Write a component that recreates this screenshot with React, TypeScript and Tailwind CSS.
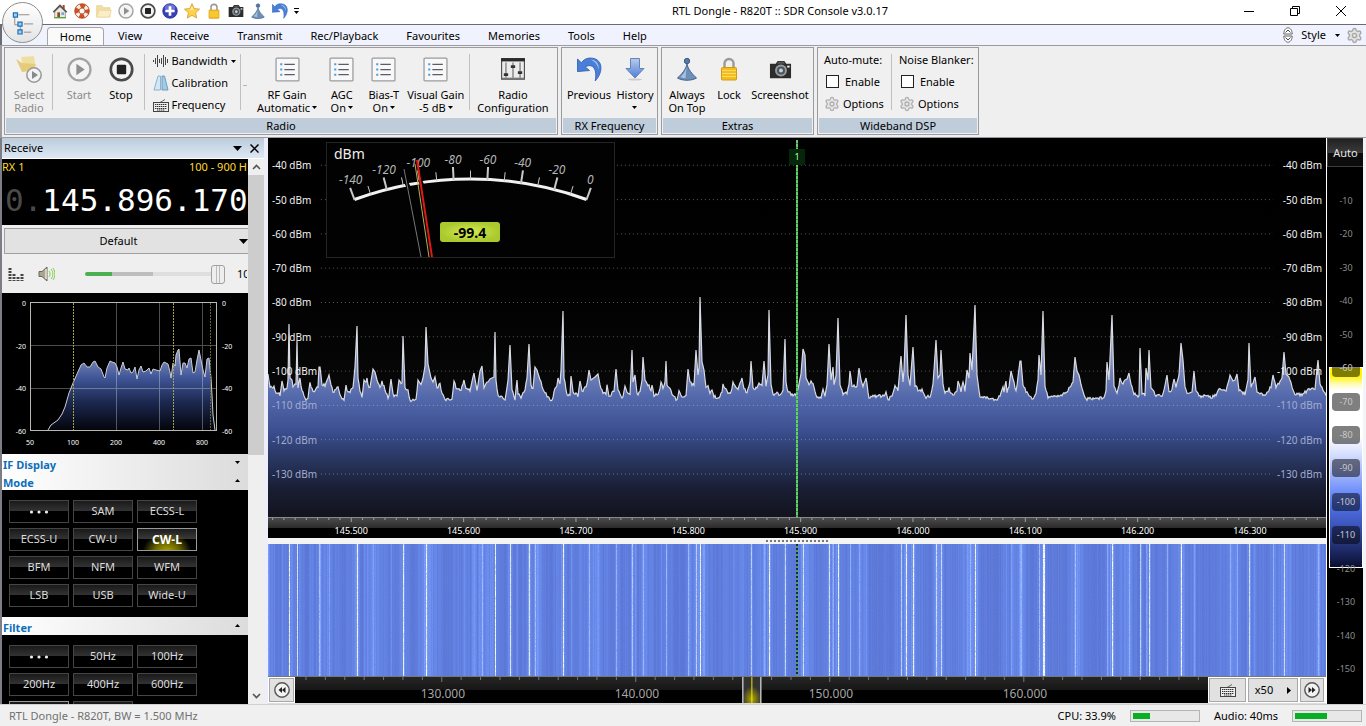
import React from "react";
import { Settings } from "lucide-react";

type IconProps = { size: number };

/* ---------- icons ---------- */

const House = ({ size }: IconProps) => (
  <svg width={size} height={size} viewBox="0 0 24 24" aria-hidden="true">
    <path d="M16 3h3v6h-3z" fill="#c0392b" />
    <path d="M4 12l8-8 8 8v10H4z" fill="#eceadf" stroke="#777" />
    <path d="M1 13L12 2l11 11-2 1.6L12 6 3 14.600z" fill="#555" />
    <path d="M8 14h4v8H8z" fill="#8a4b22" />
    <path d="M14 14h4v4h-4z" fill="#6fa8dc" />
    <path d="M3 21h18v2H3z" fill="#5fa243" />
  </svg>
);

const Lifebuoy = ({ size }: IconProps) => (
  <svg width={size} height={size} viewBox="0 0 24 24" aria-hidden="true">
    <circle cx="12" cy="12" r="7.700" fill="none" stroke="#d2501e" strokeWidth="6.500" />
    <circle cx="12" cy="12" r="7.700" fill="none" stroke="#f5efe9" strokeWidth="6" strokeDasharray="5 7.100" strokeDashoffset="-3.500" />
    <circle cx="12" cy="12" r="11" fill="none" stroke="#a33a12" />
    <circle cx="12" cy="12" r="4.400" fill="none" stroke="#a33a12" />
  </svg>
);

const Folder = ({ size }: IconProps) => (
  <svg width={size} height={size} viewBox="0 0 24 24" aria-hidden="true">
    <path d="M1 4h8l2 3h10v14H1z" fill="#f3dfa4" stroke="#e3cb85" />
    <path d="M5 11h18l-3 10H1z" fill="#fbeec6" stroke="#e6d196" />
  </svg>
);

const Play = ({ size }: IconProps) => (
  <svg width={size} height={size} viewBox="0 0 24 24" aria-hidden="true">
    <circle cx="12" cy="12" r="10.500" fill="#f4f4f4" stroke="#a3a3a3" strokeWidth="2.200" />
    <path d="M9 6.500l8 5.500-8 5.500z" fill="#8f8f8f" />
  </svg>
);

const Stop = ({ size }: IconProps) => (
  <svg width={size} height={size} viewBox="0 0 24 24" aria-hidden="true">
    <circle cx="12" cy="12" r="10.300" fill="#f4f4f4" stroke="#4a4a4a" strokeWidth="2.600" />
    <rect x="7.500" y="7.500" width="9" height="9" rx="1" fill="#222" />
  </svg>
);

const Plus = ({ size }: IconProps) => (
  <svg width={size} height={size} viewBox="0 0 24 24" aria-hidden="true">
    <circle cx="12" cy="12" r="11" fill="#3742b8" stroke="#20287e" />
    <ellipse cx="12" cy="7" rx="8" ry="5" fill="#7c86e4" opacity="0.700" />
    <path d="M10 5h4v5h5v4h-5v5h-4v-5H5v-4h5z" fill="#fff" />
  </svg>
);

const Star = ({ size }: IconProps) => (
  <svg width={size} height={size} viewBox="0 0 24 24" aria-hidden="true">
    <path d="M12 1l3.300 7.300 8 .9-6 5.300 1.800 8L12 18.500 4.900 22.500l1.800-8-6-5.300 8-.9z" fill="#fbd34c" stroke="#e0992a" strokeWidth="1.300" />
    <path d="M12 4l2 6-9 0 5-.500z" fill="#fff3b8" />
  </svg>
);

const Lock = ({ size }: IconProps) => (
  <svg width={size} height={size} viewBox="0 0 24 24" aria-hidden="true">
    <path d="M7.500 11V6.500a4.500 4.500 0 019 0V11" fill="none" stroke="#9a9a9a" strokeWidth="2.400" />
    <rect x="4.500" y="10.500" width="15" height="12.500" rx="1" fill="#f5bd1b" stroke="#d39a10" />
    <path d="M5 13.500h14M5 16.500h14M5 19.500h14" stroke="#fbdc6a" />
  </svg>
);

const Camera = ({ size }: IconProps) => (
  <svg width={size} height={size} viewBox="0 0 24 24" aria-hidden="true">
    <path d="M1 6h6l2-3h7l2 3h5v15H1z" fill="#2c2c2c" />
    <path d="M9.500 4h6l1 2h-8z" fill="#555" />
    <circle cx="12.500" cy="13" r="6.200" fill="#9a9a9a" />
    <circle cx="12.500" cy="13" r="4.200" fill="#4a5560" />
    <circle cx="12.500" cy="13" r="2" fill="#c5d2dd" />
    <rect x="19" y="8" width="2.500" height="2" fill="#eee" />
  </svg>
);

const Pawn = ({ size }: IconProps) => (
  <svg width={size} height={size} viewBox="0 0 24 24" aria-hidden="true">
    <path d="M12 7c1 5 5 10 9.500 14-5 3-14 3-19 0C7 17 11 12 12 7z" fill="#6d8fb8" stroke="#41618b" />
    <path d="M11.500 10c-1 4-3 7-6 10 2 1 4 1.200 5 1.200z" fill="#a9c1dc" />
    <circle cx="12" cy="4" r="2.700" fill="#5679a6" stroke="#3d5c86" />
  </svg>
);

const Undo = ({ size }: IconProps) => (
  <svg width={size} height={size} viewBox="0 0 24 24" aria-hidden="true">
    <path d="M.5 2v12L12 13 8 9.500c5-3 12-1 9.500 13.500C26 14 25 .5 12 1 8.500 1.300 6 3 4.200 5.500z" fill="#4a7fd8" stroke="#2d5cb4" strokeWidth="0.800" />
    <path d="M13 2.500c5 0 8.500 4 8 10-1-5-4-8-8-10z" fill="#9cc0f2" />
  </svg>
);

const DownArrow = ({ size }: IconProps) => (
  <svg width={size} height={size} viewBox="0 0 24 24" aria-hidden="true">
    <defs>
      <linearGradient id="arrowFill" x1="0" y1="0" x2="0" y2="1">
        <stop offset="0" stopColor="#b9cbea" />
        <stop offset="1" stopColor="#4f7fd6" />
      </linearGradient>
    </defs>
    <ellipse cx="12" cy="22.500" rx="7" ry="1" fill="#ccc" />
    <path d="M7.500 1.500h9v10h4.500L12 21 3 11.500h4.500z" fill="url(#arrowFill)" stroke="#6383bd" />
  </svg>
);

const ListBox = ({ size }: IconProps) => (
  <svg width={size} height={size} viewBox="0 0 24 24" aria-hidden="true">
    <rect x="1" y="1" width="22" height="22" rx="1" fill="#f8f8f8" stroke="#9a9a9a" strokeWidth="1.200" />
    <path d="M5 6h2v2H5zM5 11h2v2H5zM5 16h2v2H5z" fill="#4aa0e0" />
    <path d="M9 7h10M9 12h10M9 17h10" stroke="#5c5c66" strokeWidth="1.200" />
  </svg>
);

const Mixer = ({ size }: IconProps) => (
  <svg width={size} height={size} viewBox="0 0 24 24" aria-hidden="true">
    <rect x="1.500" y="2.500" width="21" height="19" fill="#ececec" stroke="#444" />
    <path d="M1 2h22v3H1z" fill="#2a2a2a" />
    <path d="M1.500 20h21v2h-21z" fill="#777" />
    <path d="M5.500 6v14M12 6v14M18.500 6v14" stroke="#666" />
    <path d="M3.500 16h4v2.500h-4zM10 8.500h4V11h-4zM16.500 14h4v2.500h-4z" fill="#333" />
  </svg>
);

const FolderPlay = ({ size }: IconProps) => (
  <svg width={size} height={size} viewBox="0 0 28 28" aria-hidden="true">
    <path d="M6 2l13-1 2 13-12 2z" fill="#f0dea0" />
    <path d="M1 4l6 4 14 1-4 7-10 1z" fill="#e6cc7a" />
    <circle cx="19" cy="20" r="7.200" fill="#f3f3f3" stroke="#979797" strokeWidth="1.500" />
    <path d="M17 16l6 4-6 4z" fill="#8a8a8a" />
  </svg>
);

const Bandwidth = () => (
  <svg width="16" height="16" viewBox="0 0 16 16" aria-hidden="true">
    <path d="M.5 7v2M2.500 5v6M4.500 2v12M6.500 6v4M8.500 5v6M10.500 2v12M12.500 4v8M14.500 6v4" stroke="#444" />
  </svg>
);

const Calibration = () => (
  <svg width="16" height="16" viewBox="0 0 16 16" aria-hidden="true">
    <path d="M5 1h2.500v14H1z" fill="#d3e8f5" stroke="#8ab4d0" />
    <path d="M9 1h2.500L15 15H9z" fill="#a5cbe4" stroke="#6b9dc0" />
  </svg>
);

const Keyboard = () => (
  <svg width="16" height="16" viewBox="0 0 16 16" aria-hidden="true">
    <path d="M7 5.500L12 2.500" fill="none" stroke="#666" />
    <rect x="0.500" y="5.500" width="15" height="9" fill="#eee" stroke="#444" />
    <path d="M2 7.500h12M2 9.500h12M2 11.500h12M4 13h8" stroke="#333" strokeDasharray="1.400 .6" />
  </svg>
);

const Caret = ({ up = false }: { up?: boolean }) => (
  <svg width="5" height="3" viewBox="0 0 5 3" className="shrink-0" aria-hidden="true">
    <path d={up ? "M0 3h5L2.500 0z" : "M0 0h5L2.500 3z"} fill="#000" />
  </svg>
);

/* ---------- signal data ---------- */

const TRACE: number[][] =
  `268,374 270,388 274,387 276,392 280,395 282,381 284,390 287,388 288,380 289,324 290,378 292,380 293,387 296,384 297,341 298,388 300,378 302,391 306,400 308,397 310,383 313,392 317,388 318,386 319,367 320,367 322,384 325,385 328,378 329,375 331,385 333,392 338,387 341,397 344,399 346,386 347,392 350,392 353,388 355,367 357,326 358,378 360,391 362,396 364,380 366,383 367,378 368,386 370,387 373,369 375,372 377,380 380,387 382,381 385,390 388,398 389,396 391,379 393,395 397,396 399,380 402,384 403,336 405,388 408,391 410,400 416,400 418,380 421,385 423,378 425,366 426,327 428,364 431,378 433,382 435,377 437,389 440,383 441,391 446,400 452,398 454,381 457,390 461,390 464,380 466,388 470,390 473,377 474,373 476,385 477,390 480,371 482,366 484,388 490,379 494,377 495,332 496,380 498,396 505,399 508,380 510,345 512,390 515,400 517,380 518,394 521,398 525,390 527,378 529,344 531,386 533,388 535,367 537,370 541,383 544,392 550,399 552,401 554,392 557,385 558,378 560,385 561,370 563,311 564,378 567,394 570,396 571,376 573,392 578,396 580,381 582,392 587,385 589,370 591,380 595,377 598,374 601,390 606,395 607,384 609,397 614,391 616,369 618,391 620,394 623,398 625,385 627,392 630,396 632,350 633,382 635,375 637,394 640,393 642,380 643,357 645,380 649,386 651,391 652,384 654,395 659,393 661,382 663,388 665,382 666,361 667,385 672,393 676,400 678,397 679,391 681,396 686,396 688,369 690,383 694,385 696,350 698,375 699,368 700,297 702,362 704,370 706,388 708,386 710,395 712,390 714,396 718,399 722,392 723,385 727,392 731,392 733,382 735,385 738,390 742,378 744,388 747,394 750,382 751,361 753,387 755,389 757,388 759,383 762,386 764,361 766,385 768,375 769,310 771,385 773,395 777,393 780,396 783,390 785,339 786,382 788,392 792,395 796,395 798,388 801,374 803,349 805,355 806,378 809,384 811,381 813,384 815,392 817,398 821,397 823,389 825,395 827,385 829,344 831,380 833,367 834,385 836,376 838,318 840,385 843,394 847,393 849,385 850,371 852,385 857,386 859,368 861,380 863,387 866,378 868,391 869,397 873,396 878,396 883,396 886,393 888,399 892,397 895,386 898,390 901,356 903,382 904,370 906,315 908,375 910,385 913,347 915,385 919,392 922,390 926,397 930,396 933,385 936,340 938,378 940,375 941,350 943,385 945,394 949,389 953,396 957,390 958,381 961,391 963,382 965,390 967,370 969,378 970,353 972,370 975,305 977,375 980,397 985,398 990,398 997,400 1000,396 1003,386 1004,393 1006,381 1007,393 1009,386 1011,371 1014,383 1016,392 1020,361 1021,361 1023,385 1027,393 1032,399 1036,393 1038,380 1039,355 1041,375 1043,311 1045,385 1048,397 1052,396 1062,395 1068,390 1073,382 1075,357 1077,371 1079,375 1082,388 1086,400 1088,398 1095,399 1104,397 1106,390 1107,362 1109,380 1112,315 1114,385 1117,392 1119,384 1120,378 1122,384 1125,380 1127,379 1129,373 1131,385 1134,394 1139,396 1140,348 1142,393 1145,396 1146,368 1148,380 1149,350 1151,388 1156,395 1163,395 1167,375 1169,392 1172,389 1174,379 1176,388 1179,375 1181,343 1183,360 1185,388 1188,394 1192,392 1194,371 1196,392 1200,396 1212,397 1217,394 1219,389 1226,390 1229,380 1230,375 1233,381 1235,380 1237,374 1239,390 1245,394 1248,380 1249,343 1251,388 1255,377 1257,392 1265,395 1271,387 1273,375 1276,388 1282,378 1284,352 1286,374 1289,377 1292,387 1295,394 1302,395 1308,390 1315,388 1318,360 1320,384 1326,396`
    .split(" ")
    .map((p) => p.split(",").map(Number));

const jitter = (n: number) => {
  const v = Math.sin(n * 127.1) * 43758.5453;
  return v - Math.floor(v);
};

const COLUMNS: number[] = (() => {
  const out: number[] = [];
  let k = 0;
  for (let x = 268; x <= 1326; x++) {
    while (k < TRACE.length - 2 && TRACE[k + 1][0] < x) k++;
    const [x0, y0] = TRACE[k];
    const [x1, y1] = TRACE[k + 1];
    const y = y0 + ((y1 - y0) * (x - x0)) / (x1 - x0);
    out.push(y > 382 ? y + (jitter(x) - 0.5) * 3 : y);
  }
  return out;
})();

const TRACE_POINTS = COLUMNS.map((y, i) => `${i},${(y - 138).toFixed(1)}`).join(" ");

/* Waterfall palette, from the noise floor up to a strong carrier. */
const STOPS = [
  [90, 119, 216],
  [98, 131, 230],
  [114, 149, 248],
  [158, 188, 255],
  [252, 252, 236],
];

const heat = (i: number) => {
  const y = COLUMNS[i];
  const peak = y < 376 && y <= Math.min(...COLUMNS.slice(Math.max(0, i - 2), i + 3));
  const level = peak ? 2.3 + (374 - y) / 24 : Math.min(1.7, (398 - y) / 15);
  const t = Math.max(0, Math.min(3.99, level + jitter(i + 3000) * 0.9 - 0.3));
  const a = Math.floor(t);
  const f = t - a;
  const c = STOPS[a].map((v, n) => Math.round(v + (STOPS[a + 1][n] - v) * f));
  return `rgb(${c.join(",")})`;
};

/* ---------- window chrome ---------- */

const QUICK: [string, React.FC<IconProps>][] = [
  ["Home", House],
  ["Help", Lifebuoy],
  ["Open", Folder],
  ["Start", Play],
  ["Stop", Stop],
  ["Add", Plus],
  ["Favourite", Star],
  ["Lock", Lock],
  ["Screenshot", Camera],
  ["Always on top", Pawn],
  ["Previous", Undo],
];

function TitleBar() {
  return (
    <header className="relative flex h-6 shrink-0 items-center bg-white pb-[2px]">
      <button aria-label="Application menu" className="absolute left-[2px] top-[2px] z-10 flex size-[41px] items-center justify-center rounded-full border border-[#8c8c8c] bg-linear-to-b from-white to-[#e4e4e4]">
        <svg width="22" height="24" viewBox="0 0 24 26" aria-hidden="true">
          <path d="M3 6v9h4M9 15v8M7 4h12M13 14h10M13 23h8" fill="none" stroke="#888" />
          <path d="M1.500 2h4.500v4.500H1.500zM6.500 12H11v4.500H6.500zM6.500 20.500H11V25H6.500z" fill="#9fd0f5" stroke="#1f6fb5" strokeWidth="1.300" />
        </svg>
      </button>
      <div className="flex w-[334px] shrink-0 items-center gap-[6px] pl-[52px]">
        {QUICK.map(([label, Icon]) => (
          <button key={label} aria-label={label}>
            <Icon size={16} />
          </button>
        ))}
        <button aria-label="Customise toolbar" className="flex flex-col items-center gap-[2px]">
          <i className="h-px w-[5px] bg-black" />
          <Caret />
        </button>
      </div>
      <h1 className="flex-1 text-center">RTL Dongle - R820T :: SDR Console v3.0.17</h1>
      <div className="flex h-full pr-[2px]">
        <button aria-label="Minimise" className="flex w-[46px] items-center justify-center">
          <svg width="10" height="10" viewBox="0 0 10 10"><path d="M0 5.500h10" stroke="#000" /></svg>
        </button>
        <button aria-label="Restore" className="flex w-[46px] items-center justify-center">
          <svg width="10" height="10" viewBox="0 0 10 10"><path d="M.5 2.500h7v7h-7zM2.500 2.500v-2h7v7h-2" fill="none" stroke="#000" /></svg>
        </button>
        <button aria-label="Close" className="flex w-[46px] items-center justify-center">
          <svg width="10" height="10" viewBox="0 0 10 10"><path d="M0 0l10 10M10 0L0 10" stroke="#000" /></svg>
        </button>
      </div>
    </header>
  );
}

function Tabs() {
  return (
    <nav className="flex h-[21px] shrink-0 items-stretch border-t border-l-2 border-[#6b6b73] bg-[#f0f3fd] pl-[45px]">
      <a href="#home" className="mt-[2px] flex w-[57px] items-center justify-center rounded-t border border-b-0 border-[#a6a6a6] bg-[#fafafa]">Home</a>
      {["View", "Receive", "Transmit", "Rec/Playback", "Favourites", "Memories", "Tools", "Help"].map((t) => (
        <a key={t} href={`#${t.toLowerCase()}`} className="flex items-center px-[14px] pt-[2px]">{t}</a>
      ))}
      <div className="ml-auto flex items-center gap-2 pr-[3px]">
        <svg width="10" height="16" viewBox="0 0 10 16" aria-hidden="true">
          <path d="M.8 7C.8 3 3 .8 5 .8S9.200 3 9.200 7zM.8 9c0 4 2.200 6.200 4.200 6.200S9.200 13 9.200 9z" fill="#fff" stroke="#666" />
          <path d="M2.500 5.500L5 3l2.500 2.500M2.500 10.500L5 13l2.500-2.500" fill="none" stroke="#444" />
        </svg>
        <div className="flex items-center gap-[6px]">
          <button className="flex items-center gap-[9px]">Style <Caret /></button>
          <Settings size={17} className="text-[#a8a8a8]" fill="#e4e4e4" />
        </div>
      </div>
    </nav>
  );
}

function Group({ label, children, className = "" }: { label: string; children: React.ReactNode; className?: string }) {
  return (
    <section className={`flex shrink-0 flex-col border border-[#9a9aa0] bg-[#f0f0f0] p-px ${className}`}>
      <div className="flex flex-1">{children}</div>
      <h2 className="h-[15px] bg-[#bfccda] text-center leading-[15px]">{label}</h2>
    </section>
  );
}

function Big({ icon, top, bottom, caret = false, dim = false, className = "" }: { icon: React.ReactNode; top: string; bottom?: string; caret?: boolean; dim?: boolean; className?: string }) {
  return (
    <button className={`flex shrink-0 flex-col items-center gap-[6px] whitespace-nowrap pt-[7px] leading-[13px] ${dim ? "text-[#8a8a8a]" : ""} ${className}`}>
      <span className="flex h-[26px] items-center">{icon}</span>
      <span className="flex flex-col items-center">
        <span>{top}</span>
        <span className="flex min-h-[13px] items-center gap-[2px]">{bottom}{caret && <Caret />}</span>
      </span>
    </button>
  );
}

const Sep = () => <i className="mt-[5px] h-14 w-px shrink-0 bg-[#c0c0c0]" />;

function DspColumn({ id, label }: { id: string; label: string }) {
  return (
    <div className="flex flex-col gap-[5px] whitespace-nowrap pt-[3px]">
      <span className="leading-[16px]">{label}</span>
      <label htmlFor={id} className="flex items-center gap-[6px] pl-[2px] leading-[17px]">
        <input id={id} type="checkbox" className="size-[13px] appearance-none border border-[#222] bg-white checked:bg-[#333]" />
        Enable
      </label>
      <button className="flex items-center gap-[3px] leading-[17px]">
        <Settings size={16} className="text-[#b0b0b0]" fill="#e6e6e6" />
        Options
      </button>
    </div>
  );
}

function Ribbon() {
  return (
    <div className="flex h-[93px] shrink-0 gap-[3px] overflow-hidden border-y border-l-2 border-[#9a9aa0] bg-[#efefef] pb-[2px] pl-[2px] pt-px">
      <Group label="Radio" className="w-[554px]">
        <Big className="w-[46px]" dim icon={<FolderPlay size={28} />} top="Select" bottom="Radio" />
        <Sep />
        <Big className="w-[52px]" dim icon={<Play size={25} />} top="Start" />
        <Big className="w-8" icon={<Stop size={25} />} top="Stop" />
        <span className="w-[7px]" />
        <Sep />
        <div className="flex w-[98px] flex-col gap-[6px] pl-2 pt-1">
          <button className="flex h-4 items-center gap-[3px]"><Bandwidth />Bandwidth<Caret /></button>
          <button className="flex h-4 items-center gap-[3px]"><Calibration />Calibration</button>
          <button className="flex h-4 items-center gap-[3px]"><Keyboard />Frequency</button>
        </div>
        <span className="w-[3px]" />
        <Sep />
        <span className="flex w-[6px] justify-end pt-9"><i className="h-px w-1 bg-[#b8b8b8]" /></span>
        <Big className="w-[80px]" icon={<ListBox size={25} />} top="RF Gain" bottom="Automatic" caret />
        <span className="w-[5px]" />
        <Big className="w-5" icon={<ListBox size={25} />} top="AGC" bottom="On " caret />
        <Big className="w-[64px]" icon={<ListBox size={25} />} top="Bias-T" bottom="On " caret />
        <Big className="w-10" icon={<ListBox size={25} />} top="Visual Gain" bottom="-5 dB" caret />
        <span className="w-[14px]" />
        <Sep />
        <Big className="w-[86px]" icon={<Mixer size={26} />} top="Radio" bottom="Configuration" />
      </Group>
      <Group label="RX Frequency" className="w-[97px]">
        <Big className="w-[52px]" icon={<Undo size={25} />} top="Previous" />
        <Big className="w-10" icon={<DownArrow size={24} />} top="History" caret />
      </Group>
      <Group label="Extras" className="w-[153px]">
        <Big className="w-[48px]" icon={<Pawn size={24} />} top="Always" bottom="On Top" />
        <Big className="w-9" icon={<Lock size={24} />} top="Lock" />
        <Big className="w-[66px]" icon={<Camera size={23} />} top="Screenshot" />
      </Group>
      <Group label="Wideband DSP" className="w-[162px]">
        <div className="flex gap-[7px] pl-[5px]">
          <DspColumn id="mute" label="Auto-mute:" />
          <Sep />
          <DspColumn id="blanker" label="Noise Blanker:" />
        </div>
      </Group>
    </div>
  );
}

/* ---------- left panel ---------- */

const AUDIO =
  "48,430 51,425 58,420 62,414 65,407 69,393 73,383 77,374 81,365 84,363 87,367 90,367 93,362 95,361 98,367 101,369 104,377 105,378 107,368 110,361 112,362 115,363 117,367 119,375 121,368 123,362 125,369 128,370 129,368 131,373 133,372 135,367 137,379 139,370 141,366 143,372 146,371 149,368 151,374 153,369 156,370 160,371 162,365 164,362 168,364 170,372 171,378 173,363 175,366 176,355 178,350 179,349 181,375 183,363 185,363 187,368 189,359 191,358 193,373 195,372 197,360 199,350 201,360 203,370 205,377 207,359 209,358 211,378 212,395 213,415 215,430";

function AudioChart() {
  return (
    <svg viewBox="2 293 246 161" className="block h-[161px] w-full shrink-0 bg-black" fontSize="7" fill="#fff" role="img" aria-label="Audio spectrum">
      <defs>
        <linearGradient id="audioFill" gradientUnits="userSpaceOnUse" x1="0" y1="350" x2="0" y2="430">
          <stop offset="0" stopColor="#8f9bc4" />
          <stop offset="0.350" stopColor="#3f5596" />
          <stop offset="0.650" stopColor="#1c2850" />
          <stop offset="1" stopColor="#04050c" />
        </linearGradient>
      </defs>
      <polygon points={`48,430 ${AUDIO}`} fill="url(#audioFill)" />
      <path d="M116.500 303v127M159.500 303v127M202.500 303v127M31 345.500h185M31 388.500h185" stroke="#fff" opacity="0.300" />
      <polyline points={AUDIO} fill="none" stroke="#c9ccd6" />
      <path d="M73.500 303v127M173.500 303v127" stroke="#a5a348" strokeDasharray="2 1" />
      <path d="M210.500 303v127" stroke="#66652c" strokeDasharray="2 1" />
      <rect x="30.500" y="302.500" width="186" height="128" fill="none" stroke="#b8b8b0" />
      {[0, -20, -40, -60].map((v, i) => (
        <React.Fragment key={v}>
          <text x="26" y={306 + i * 42.700} textAnchor="end">{v}</text>
          <text x="222" y={306 + i * 42.700}>{v}</text>
        </React.Fragment>
      ))}
      {[50, 100, 200, 400, 800].map((v, i) => (
        <text key={v} x={30 + i * 43} y="445" textAnchor="middle">{v}</text>
      ))}
    </svg>
  );
}

function SectionBar({ title, up }: { title: string; up?: boolean }) {
  return (
    <button className="flex h-[18px] w-full shrink-0 items-center justify-between bg-linear-to-r from-white to-[#dcdcdc] pl-px pr-2 pt-[3px] font-bold text-[#0e6fba]">
      {title}
      <span className="pb-[5px]"><Caret up={up} /></span>
    </button>
  );
}

const Dots = () => (
  <svg width="20" height="4" viewBox="0 0 20 4" className="mx-auto" role="img" aria-label="More">
    <g fill="#eee">
      <circle cx="2.500" cy="2" r="1.600" />
      <circle cx="10" cy="2" r="1.600" />
      <circle cx="17.500" cy="2" r="1.600" />
    </g>
  </svg>
);

function Pads({ items, active, children }: { items: string[]; active?: string; children?: React.ReactNode }) {
  return (
    <div className="grid shrink-0 grid-cols-[repeat(3,60px)] gap-x-1 gap-y-[5px] bg-black px-[7px] py-[10px]">
      <button className="h-[23px] border border-[#454545] bg-[linear-gradient(#1a1a1a,#333_48%,#000_50%)]"><Dots /></button>
      {items.map((t) => (
        <button
          key={t}
          aria-pressed={t === active}
          className={
            t === active
              ? "h-[23px] border border-[#9a9a9a] bg-[radial-gradient(ellipse_at_50%_110%,#b0a800_0%,#6a6500_30%,transparent_60%),linear-gradient(#1c1c1c,#3a3a3a_48%,#000_50%)] text-[12px] font-bold leading-[20px] text-white"
              : "h-[23px] border border-[#454545] bg-[linear-gradient(#1a1a1a,#333_48%,#000_50%)] pb-px leading-[20px] text-[#dcdcdc]"
          }
        >
          {t}
        </button>
      ))}
      {children}
    </div>
  );
}

function Receive() {
  return (
    <aside className="flex w-[264px] shrink-0 flex-col border-l-2 border-[#7d7d85]">
      <div className="flex h-[21px] shrink-0 items-center gap-2 border-b border-white bg-linear-to-b from-[#bdcbdb] to-[#dde8f3] pl-[2px] pr-[5px]">
        <h2 className="flex-1">Receive</h2>
        <svg width="9" height="5" viewBox="0 0 9 5"><path d="M0 0h9L4.500 5z" /></svg>
        <button aria-label="Close panel">
          <svg width="9" height="9" viewBox="0 0 9 9"><path d="M.5.500l8 8M8.500.500l-8 8" stroke="#000" strokeWidth="1.500" /></svg>
        </button>
      </div>
      <div className="flex min-h-0 flex-1">
        <div className="flex min-w-0 flex-1 flex-col overflow-hidden bg-black">
          <div className="h-[66px] shrink-0 overflow-hidden whitespace-nowrap bg-black">
            <div className="flex justify-between pr-px leading-[16px] text-[#ffd92e]">
              <span>RX 1</span>
              <span>100 - 900 H</span>
            </div>
            <p className="pl-[3px] pt-[2px] font-['DejaVu_Sans_Mono',monospace] text-[31px] leading-[46px] text-white">
              <span className="text-[#4a4a4a]">0.</span>145.896.170
            </p>
          </div>
          <div className="relative flex h-[29px] shrink-0 items-end bg-[#efefef] pl-[2px]">
            <select aria-label="Preset" defaultValue="Default" className="h-[26px] w-full appearance-none border border-r-0 border-[#a0a0a0] bg-[#e2e2e2] pr-4 [text-align-last:center]">
              <option>Default</option>
            </select>
            <svg width="9" height="5" viewBox="0 0 9 5" className="pointer-events-none absolute right-0 top-[14px]"><path d="M0 0h9L4.500 5z" /></svg>
          </div>
          <div className="flex h-[39px] shrink-0 items-center overflow-hidden whitespace-nowrap bg-[#efefef] pl-[6px] pt-px">
            <svg width="16" height="14" viewBox="0 0 16 14" className="shrink-0" aria-hidden="true">
              <path d="M2 1v13M6 7v7M10 10v4M14 7v7" stroke="#444" strokeWidth="3" strokeDasharray="2 1" />
            </svg>
            <button aria-label="Mute" className="ml-[14px] shrink-0">
              <svg width="17" height="16" viewBox="0 0 17 16">
                <path d="M1 5.500h3L9 1v14l-5-4.500H1z" fill="#a9a493" stroke="#6c6757" />
                <path d="M8 3v10" stroke="#e9e6da" strokeWidth="1.500" />
                <path d="M11 5c1.500 2 1.500 4 0 6M13 3c2.500 3 2.500 7 0 10M15 2c2.500 4 2.500 8 0 12" fill="none" stroke="#7bcf4e" />
              </svg>
            </button>
            <input
              aria-label="Volume"
              type="range"
              defaultValue="100"
              className="ml-[30px] h-[4px] w-[140px] shrink-0 appearance-none rounded bg-[linear-gradient(90deg,#4caf50_27px,#bdbdbd_27px,#bdbdbd_68px,#dedede_68px)] [&::-webkit-slider-thumb]:h-[19px] [&::-webkit-slider-thumb]:w-[14px] [&::-webkit-slider-thumb]:appearance-none [&::-webkit-slider-thumb]:rounded-[3px] [&::-webkit-slider-thumb]:border [&::-webkit-slider-thumb]:border-[#a0a0a0] [&::-webkit-slider-thumb]:bg-[linear-gradient(90deg,#eee_4px,#bbb_4px,#bbb_5px,#eee_5px,#eee_7px,#bbb_7px,#bbb_8px,#eee_8px)]"
            />
            <span className="ml-[12px] w-[10px] shrink-0 overflow-hidden">100</span>
          </div>
          <AudioChart />
          <SectionBar title="IF Display" />
          <SectionBar title="Mode" up />
          <Pads active="CW-L" items={["SAM", "ECSS-L", "ECSS-U", "CW-U", "CW-L", "BFM", "NFM", "WFM", "LSB", "USB", "Wide-U"]} />
          <SectionBar title="Filter" up />
          <Pads items={["50Hz", "100Hz", "200Hz", "400Hz", "600Hz"]}>
            <i className="h-[23px] border border-[#9a9a9a] bg-[#1a1a1a]" />
            <i className="h-[23px] border border-[#454545] bg-[#1a1a1a]" />
          </Pads>
        </div>
        <div className="flex w-[16px] shrink-0 flex-col items-center bg-[#efefef]">
          <button aria-label="Scroll up" className="flex h-4 items-center">
            <svg width="9" height="6" viewBox="0 0 9 6"><path d="M1 5l3.500-3.500L8 5" fill="none" stroke="#555" strokeWidth="1.600" /></svg>
          </button>
          <div className="min-h-0 w-full flex-1"><div className="h-[54.500%] w-full bg-[#cdcdcd]" /></div>
          <button aria-label="Scroll down" className="flex h-4 items-center">
            <svg width="9" height="6" viewBox="0 0 9 6"><path d="M1 1l3.500 3.500L8 1" fill="none" stroke="#555" strokeWidth="1.600" /></svg>
          </button>
        </div>
      </div>
    </aside>
  );
}

/* ---------- spectrum ---------- */

const RADIUS = 338;
const at = (value: number, r: number): [number, number] => {
  const a = (((value + 70) / 20) * 5.73 * Math.PI) / 180;
  return [144.5 + r * Math.sin(a), 375.5 - r * Math.cos(a)];
};

function Meter() {
  const ticks = Array.from({ length: 15 }, (_, i) => -140 + i * 10);
  return (
    <svg width="289" height="116" viewBox="0 0 289 116" className="absolute left-[58px] top-1" role="img" aria-label="Signal level">
      <defs>
        <radialGradient id="badge">
          <stop offset="0" stopColor="#d6ea52" />
          <stop offset="1" stopColor="#a9c92e" />
        </radialGradient>
      </defs>
      <rect x="0.500" y="0.500" width="288" height="115" fill="#020202" stroke="#242424" />
      <text x="8" y="17" fontSize="14" fill="#eee">dBm</text>
      <path d={`M28.500 57.500A${RADIUS} ${RADIUS} 0 0 1 260.500 57.500`} fill="none" stroke="#f2f2f2" strokeWidth="3" />
      {ticks.map((v) => {
        const major = v % 20 === 0;
        const [x1, y1] = at(v, RADIUS);
        const [x2, y2] = at(v, RADIUS + (major ? 13 : 9));
        return <line key={v} x1={x1} y1={y1} x2={x2} y2={y2} stroke="#c8c8c8" strokeWidth={major ? 2 : 1} />;
      })}
      {ticks.filter((v) => v % 20 === 0).map((v) => {
        const [x, y] = at(-70 + (v + 70) * 0.975, RADIUS + 20);
        return <text key={v} x={x} y={y + 4} fontSize="12" fontStyle="italic" fill="#b4b4b4" textAnchor="middle">{v}</text>;
      })}
      <path d="M80 40l4 8M94 38l3 7" stroke="#020202" strokeWidth="4" />
      <path d="M78 27l17 88" stroke="#777" fill="none" />
      <path d="M89 22l14 93" stroke="#b5b04c" fill="none" />
      <path d="M91 18l15 97" stroke="#e01818" strokeWidth="2" fill="none" />
      <rect x="114" y="80" width="60" height="20" rx="3" fill="url(#badge)" />
      <text x="144" y="96" fontSize="14" fontWeight="bold" textAnchor="middle" fill="#000">-99.4</text>
    </svg>
  );
}

const LEVELS = [-40, -50, -60, -70, -80, -90, -100, -110, -120, -130];
const levelY = (i: number) => 7.2 + i * 9.05;

function Spectrum() {
  return (
    <div className="relative min-h-0 flex-1 bg-linear-to-b from-black to-[#161616]">
      <svg className="block size-full" fontSize="10" role="img" aria-label="Spectrum">
        <defs>
          <linearGradient id="specFill" gradientUnits="userSpaceOnUse" x1="0" y1="160" x2="0" y2="379">
            <stop offset="0" stopColor="#d8d8dc" />
            <stop offset="0.270" stopColor="#8592c0" />
            <stop offset="0.450" stopColor="#5469ab" />
            <stop offset="0.600" stopColor="#3c5092" />
            <stop offset="0.730" stopColor="#293762" />
            <stop offset="0.870" stopColor="#191e34" />
            <stop offset="1" stopColor="#12131d" />
          </linearGradient>
        </defs>
        <svg viewBox="0 0 1058 379" preserveAspectRatio="none" width="100%" height="100%">
          <polygon points={`0,379 ${TRACE_POINTS} 1058,379`} fill="url(#specFill)" />
          <polyline points={TRACE_POINTS} fill="none" stroke="#d9dbe2" strokeWidth="1.200" />
        </svg>
        {LEVELS.map((v, i) => (
          <React.Fragment key={v}>
            <line x1="5%" x2="95%" y1={`${levelY(i)}%`} y2={`${levelY(i)}%`} stroke="#fff" strokeOpacity="0.350" strokeDasharray="1 3" />
            <text x="4" y={`${levelY(i)}%`} dy="4" fill={i > 6 ? "#a3acd0" : "#f0f0f0"}>{v} dBm</text>
            <text x="100%" dx="-4" y={`${levelY(i)}%`} dy="4" textAnchor="end" fill={i > 6 ? "#a3acd0" : "#f0f0f0"}>{v} dBm</text>
          </React.Fragment>
        ))}
        <line x1="50%" x2="50%" y1="2" y2="100%" stroke="#3f8f45" strokeWidth="2" />
        <line x1="50%" x2="50%" y1="2" y2="100%" stroke="#5ed267" strokeWidth="2" strokeDasharray="3 1" />
      </svg>
      <span className="absolute left-1/2 top-[11px] flex h-4 w-4 -translate-x-1/2 items-center justify-center bg-[#06260a] text-[9px] text-[#b8ffb8]">1</span>
      <Meter />
    </div>
  );
}

function FrequencyAxis() {
  return (
    <svg className="block h-[21px] w-full shrink-0 bg-[linear-gradient(#4e4e4e,#2b2b2b_11px,#000_11px)]" fontSize="9" fill="#fff" role="img" aria-label="Frequency axis">
      <line x1="0" x2="100%" y1="0.500" y2="0.500" stroke="#8a8a8a" />
      {Array.from({ length: 94 }, (_, i) => (
        <line key={i} x1={`${0.44 + i * 1.0618}%`} x2={`${0.44 + i * 1.0618}%`} y1="1" y2={(i + 3) % 10 === 0 ? 5 : 3} stroke="#a0a0a0" />
      ))}
      {Array.from({ length: 9 }, (_, i) => (
        <text key={i} x={`${7.87 + i * 10.618}%`} y="17" textAnchor="middle">{(145.5 + i / 10).toFixed(3)}</text>
      ))}
    </svg>
  );
}

function Waterfall() {
  return (
    <svg className="block h-[132px] w-full shrink-0" role="img" aria-label="Waterfall">
      <defs>
        <filter id="grain" x="0" y="0" width="100%" height="100%">
          <feTurbulence type="fractalNoise" baseFrequency="0.700" numOctaves="2" seed="4" />
          <feColorMatrix values="0 0 0 0 0.150  0 0 0 0 0.220  0 0 0 0 0.600  2.600 0 0 0 -1.150" />
        </filter>
      </defs>
      <svg viewBox="0 0 1058 132" preserveAspectRatio="none" width="100%" height="100%" shapeRendering="crispEdges">
        {COLUMNS.slice(0, 1058).map((_, i) => (
          <rect key={i} x={i} y="0" width="1" height="132" fill={heat(i)} />
        ))}
        <path d="M775.500 0v132" stroke="#fff" strokeWidth="2" />
      </svg>
      <rect width="100%" height="100%" filter="url(#grain)" opacity="0.500" />
      <line x1="50%" x2="50%" y1="0" y2="100%" stroke="#162a4a" strokeWidth="2" />
      <line x1="50%" x2="50%" y1="2" y2="100%" stroke="#4da060" strokeWidth="2" strokeDasharray="2 2" />
    </svg>
  );
}

const SkipIcon = ({ back = false }: { back?: boolean }) => (
  <svg width="16" height="16" viewBox="0 0 16 16" className={back ? "rotate-180" : ""} aria-hidden="true">
    <circle cx="8" cy="8" r="7.200" fill="#f2f2f2" stroke="#555" strokeWidth="1.400" />
    <path d="M4.500 5l3.500 3-3.500 3zM8 5l3.500 3L8 11z" fill="#222" />
  </svg>
);

function BandBar() {
  const btn = "flex items-center justify-center border border-[#a8a8a8] bg-[#e1e1e1]";
  return (
    <div className="flex h-7 shrink-0 border-b border-t border-t-[#777] border-b-[#dcdcdc] bg-white">
      <div className="flex bg-white p-px"><button aria-label="Lower band" className={`${btn} w-[25px]`}><SkipIcon back /></button></div>
      <svg className="block h-full min-w-0 flex-1 bg-[linear-gradient(#262626,#161616_13px,#000_13px)]" fontSize="12" fill="#a6a6a6" role="img" aria-label="Band overview">
        <defs>
          <radialGradient id="glow" cx="0.500" cy="0.850" r="0.500">
            <stop offset="0" stopColor="#b0a800" />
            <stop offset="1" stopColor="#333" />
          </radialGradient>
        </defs>
        {Array.from({ length: 47 }, (_, i) => (
          <line key={i} x1={`${1.2 + i * 2.125}%`} x2={`${1.2 + i * 2.125}%`} y1="0" y2={(i + 3) % 10 === 0 ? 5 : 3} stroke="#777" />
        ))}
        {[130, 140, 150, 160].map((f, i) => (
          <text key={f} x={`${16.2 + i * 21.25}%`} y="21" textAnchor="middle">{f}.000</text>
        ))}
        <svg x="49%" width="20" height="100%" overflow="visible">
          <rect width="19" height="100%" fill="url(#glow)" />
          <line x1="0.500" x2="0.500" y1="0" y2="100%" stroke="#fff" />
          <line x1="18.500" x2="18.500" y1="0" y2="100%" stroke="#fff" />
          <line x1="9.500" x2="9.500" y1="0" y2="100%" stroke="#f0e800" />
        </svg>
      </svg>
      <div className="flex shrink-0 gap-[2px] bg-white py-px pl-px pr-[2px]">
        <button aria-label="Keyboard" className={`${btn} w-[37px]`}><Keyboard /></button>
        <button className={`${btn} w-[50px] gap-[14px]`}>
          x50
          <svg width="4" height="7" viewBox="0 0 4 7"><path d="M0 0v7l4-3.500z" /></svg>
        </button>
        <button aria-label="Higher band" className={`${btn} w-6`}><SkipIcon /></button>
      </div>
    </div>
  );
}

function LevelScale() {
  return (
    <aside className="flex w-10 shrink-0 flex-col border-l border-r-[3px] border-l-white border-r-[#f4f4f8] bg-black">
      <button className="h-[29px] shrink-0 border border-r-0 border-[#3c3c3c] bg-[linear-gradient(#222,#3a3a3a_50%,#0c0c0c_52%)] text-[#e4e4e4]">Auto</button>
      <div className="relative flex min-h-0 flex-1 flex-col pb-[18px] pt-[17px] text-[9px] text-[#8c8c8c]">
        <div className="absolute left-[2px] right-0 top-[37.200%] h-[37.400%] border border-white bg-[linear-gradient(#fff600_0%,#fff400_4%,#fffbb0_8%,#fff_11%,#fff_34%,#d8e0ff_43%,#9db2fb_54%,#6f8ffa_62%,#4f70e6_69%,#3f58c0_78%,#26357c_88%,#0a0f30_100%)]" />
        {Array.from({ length: 15 }, (_, i) => {
          const v = -10 * (i + 1);
          const onBand = v <= -60 && v >= -110;
          return (
            <div key={v} className="relative flex min-h-0 flex-1 items-center justify-center pl-[2px]">
              <span className={onBand ? "flex h-[18px] w-7 items-center justify-center rounded bg-black/50 text-[#c8c8c8]" : ""}>{v}</span>
            </div>
          );
        })}
      </div>
    </aside>
  );
}

function StatusBar() {
  return (
    <footer className="flex h-[22px] shrink-0 items-center border-t border-[#d0d0d0] bg-[#f0f0f0] pl-[9px] pr-1">
      <span className="flex-1 text-[#707070]">RTL Dongle - R820T, BW = 1.500 MHz</span>
      <span>CPU: 33.9%</span>
      <div className="ml-[14px] h-3 w-[70px] border border-[#b4b4b4] bg-[#e8e8e8] p-[2px]"><div className="h-full w-[27%] bg-[#06b025]" /></div>
      <span className="ml-[14px]">Audio: 40ms</span>
      <div className="ml-[14px] h-3 w-[70px] border border-[#b4b4b4] bg-[#e8e8e8] p-[2px]"><div className="h-full w-1/2 bg-[#06b025]" /></div>
    </footer>
  );
}

export default function App() {
  return (
    <div className="flex h-screen w-full flex-col overflow-hidden bg-[#efefef] font-['Noto_Sans','Open_Sans',sans-serif] text-[11px] leading-[16px] text-black">
      <TitleBar />
      <Tabs />
      <Ribbon />
      <main className="flex min-h-0 flex-1 bg-[#eeeefb]">
        <Receive />
        <div className="ml-1 flex min-w-0 flex-1 flex-col">
          <Spectrum />
          <FrequencyAxis />
          <div className="flex h-[6px] shrink-0 items-center justify-center bg-[#f4f4f4]">
            <i className="w-[62px] border-t-2 border-dotted border-[#777]" />
          </div>
          <Waterfall />
          <BandBar />
        </div>
        <LevelScale />
      </main>
      <StatusBar />
    </div>
  );
}
